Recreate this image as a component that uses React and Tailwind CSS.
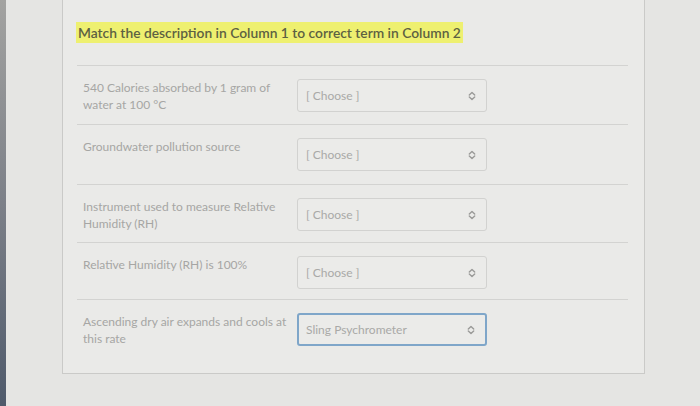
import React from "react";

const rows = [
  { text: "540 Calories absorbed by 1 gram of water at 100 °C", value: "[ Choose ]", h: "h-[59px]" },
  { text: "Groundwater pollution source", value: "[ Choose ]", h: "h-[60px]" },
  { text: "Instrument used to measure Relative Humidity (RH)", value: "[ Choose ]", h: "h-[58px]" },
  { text: "Relative Humidity (RH) is 100%", value: "[ Choose ]", h: "h-[57px]" },
  { text: "Ascending dry air expands and cools at this rate", value: "Sling Psychrometer", focused: true, h: "h-[75px]" },
];

const Chevrons = () => (
  <svg width="8" height="10" viewBox="0 0 8 10" fill="none" stroke="#9a9a98" strokeWidth="1.4" strokeLinecap="round" strokeLinejoin="round">
    <path d="M1.3 4 L4 1.4 L6.7 4" />
    <path d="M1.3 6 L4 8.6 L6.7 6" />
  </svg>
);

const Select = ({ value, focused }) => (
  <div
    className={
      "mt-[13px] h-[33px] w-[190px] flex items-center justify-between pr-[10px] rounded-[3px] bg-[#ebebe9] " +
      (focused ? "border-2 border-[#7fa6c9] pl-[7px]" : "border border-[#d2d2d0] pl-[8px]")
    }
  >
    <span className="text-[12px] text-[#a9a9a7]">{value}</span>
    <Chevrons />
  </div>
);

export default function App() {
  return (
    <div className="w-[700px] h-[406px] flex bg-[#e5e5e3] overflow-hidden" style={{ fontFamily: "Lato, 'Open Sans', sans-serif" }}>
      <div className="w-[6px] h-full bg-linear-to-b from-[#a3a3a1] via-[#7c8088] to-[#4f5a6b]" />
      <div className="ml-[56px] w-[583px] h-[374px] bg-[#eaeae8] border border-t-0 border-[#cacac8] pl-[13px] pr-[16px] pt-[22px]">
        <div className="w-fit bg-[#eef070] px-[2px] h-[21px] leading-[21px] text-[13.8px] font-semibold text-[#5d6142]">
          Match the description in Column 1 to correct term in Column 2
        </div>
        <div className="mt-[22px] ml-px">
          {rows.map((r, i) => (
            <div key={i} className={"flex border-t border-[#d3d3d1] " + r.h}>
              <div className="w-[220px] pl-[6px] pr-[10px] pt-[13px] text-[12px] leading-[17px] text-[#a6a6a4]">{r.text}</div>
              <Select value={r.value} focused={r.focused} />
            </div>
          ))}
        </div>
      </div>
    </div>
  );
}
